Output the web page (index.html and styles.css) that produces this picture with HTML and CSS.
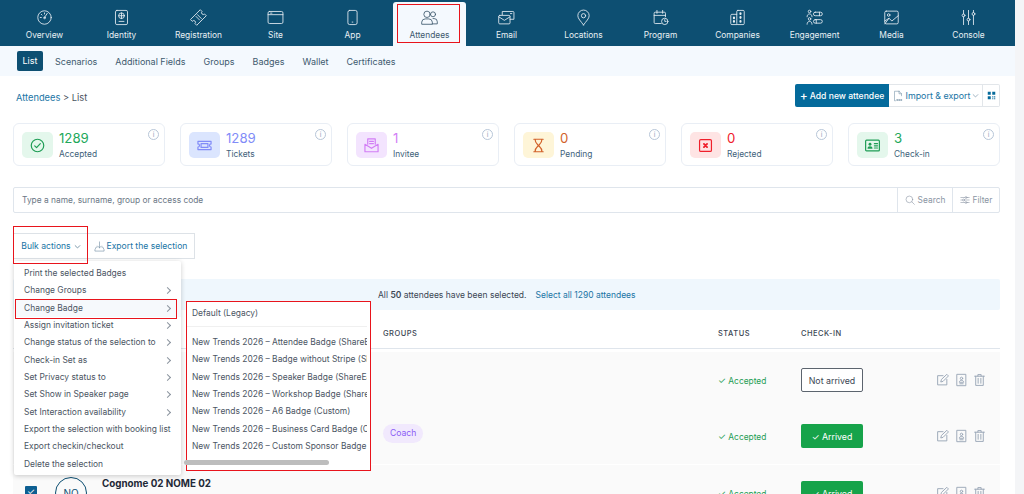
FILE: index.html
```html
<!DOCTYPE html>
<html>
    <head>
        <link rel="stylesheet" href="styles.css">
    </head>

    <body>
        <div class="page">
            <div class="main">
                <!-- Main navigation -->
                <div class="topnav">
                    <a class="navitem">
                        <svg viewBox="0 0 24 24"><circle cx="12" cy="12" r="9.500"/><path d="M12 12l4-6M6 12h1.500M12 5.500V7M7.500 7.500l1 1"/><circle cx="12" cy="12.500" r="1.200"/></svg>
                        Overview
                    </a>
                    <a class="navitem">
                        <svg viewBox="0 0 24 24"><rect x="3.500" y="2" width="17" height="20" rx="2"/><circle cx="12" cy="9.500" r="4"/><path d="M8 9.500h8M12 5.500v8M8.500 17.500h7"/></svg>
                        Identity
                    </a>
                    <a class="navitem">
                        <svg viewBox="0 0 24 24"><path d="M1 14.500L14.500 1l2.500 2.500a2 2 0 0 0 3.500 3.500L23 9.500 9.500 23 7 20.500a2 2 0 0 0-3.500-3.500z"/><path d="M8.500 10.500l5 5M10.500 8l5.500 5.500"/></svg>
                        Registration
                    </a>
                    <a class="navitem">
                        <svg viewBox="0 0 24 24"><rect x="1.500" y="3.500" width="21" height="17" rx="2"/><path d="M1.500 8h21M5 5.800h2"/></svg>
                        Site
                    </a>
                    <a class="navitem">
                        <svg viewBox="0 0 24 24"><rect x="5.500" y="2" width="13" height="20" rx="2.500"/><path d="M11.500 18.500h1"/></svg>
                        App
                    </a>
                    <a class="navitem navitem-active">
                        <svg viewBox="0 0 24 24"><circle cx="8.500" cy="7.500" r="4.500"/><circle cx="17" cy="7.500" r="3.500"/><path d="M1 21v-2.500a5 5 0 0 1 5-4.500h5a5 5 0 0 1 5 4.500V21zM17 13.500h1.500a4.500 4.500 0 0 1 4.500 4.500v3h-7"/></svg>
                        Attendees
                    </a>
                    <a class="navitem">
                        <svg viewBox="0 0 24 24"><path d="M6 8V3.500h15a1.500 1.500 0 0 1 1.500 1.500v9.500H17"/><rect x="1" y="9" width="16" height="12" rx="1.500"/><path d="M1 11l8 5 8-5M17.500 6.500h2"/></svg>
                        Email
                    </a>
                    <a class="navitem">
                        <svg viewBox="0 0 24 24"><path d="M12 22.500C8 17 4 13.500 4 9.500a8 8 0 0 1 16 0c0 4-4 7.500-8 13z"/><circle cx="12" cy="9.500" r="3"/></svg>
                        Locations
                    </a>
                    <a class="navitem">
                        <svg viewBox="0 0 24 24"><path d="M13 20.500H4.500A1.500 1.500 0 0 1 3 19V6a1.500 1.500 0 0 1 1.500-1.500h13A1.500 1.500 0 0 1 19 6v5M3 9h16M7 2v4M15 2v4"/><circle cx="18" cy="17.500" r="4.500"/><path d="M18 15v2.500h2"/></svg>
                        Program
                    </a>
                    <a class="navitem">
                        <svg viewBox="0 0 24 24"><rect x="11" y="2" width="10.500" height="20" rx="1.500"/><path d="M11 7.500H4A1.500 1.500 0 0 0 2.500 9v11.500A1.500 1.500 0 0 0 4 22h7"/><path class="thick" d="M16.200 6v1M16.200 11.500v1M16.200 17v1M7 12v1M7 17v1"/></svg>
                        Companies
                    </a>
                    <a class="navitem">
                        <svg viewBox="0 0 24 24"><circle cx="5" cy="3.500" r="1.800"/><path d="M1.500 11c0-2.500 1.500-4 3.500-4s3.500 1.500 3.500 4"/><circle cx="5" cy="14" r="1.800"/><path d="M1.500 21.500c0-2.500 1.500-4 3.500-4s3.500 1.500 3.500 4"/><rect x="10.500" y="4.500" width="12.500" height="5" rx="2.500"/><rect x="10.500" y="15" width="12.500" height="5" rx="2.500"/><path d="M19 4.500v5M14.500 15v5"/></svg>
                        Engagement
                    </a>
                    <a class="navitem">
                        <svg viewBox="0 0 24 24"><rect x="2.500" y="3" width="19" height="18" rx="2"/><circle cx="8" cy="8.500" r="1.800"/><path d="M2.500 17l6-4 4 4 9-7.500M2.500 21l6-8"/></svg>
                        Media
                    </a>
                    <a class="navitem">
                        <svg viewBox="0 0 24 24"><path d="M5 2v5M5 11v11M12 2v11M12 17v5M19 2v3M19 9v13"/><circle cx="5" cy="9" r="2"/><circle cx="12" cy="15" r="2"/><circle cx="19" cy="7" r="2"/></svg>
                        Console
                    </a>
                </div>

                <!-- Attendees sections -->
                <div class="subnav">
                    <a class="subitem subitem-active">List</a>
                    <a class="subitem">Scenarios</a>
                    <a class="subitem">Additional Fields</a>
                    <a class="subitem">Groups</a>
                    <a class="subitem">Badges</a>
                    <a class="subitem">Wallet</a>
                    <a class="subitem">Certificates</a>
                </div>

                <div class="content">
                    <div class="headrow">
                        <div class="breadcrumb"><a>Attendees</a> &gt; List</div>
                        <div class="headbtns">
                            <a class="btn-add"><span class="plus">+</span> Add new attendee</a>
                            <a class="btn-import">
                                <svg viewBox="0 0 24 24"><path d="M14 2.500H5v19h2M14 2.500l5 5v4M14 2.500v5h5"/><path class="thick" d="M10 20h1M14 20h1M18 20h1"/></svg>
                                Import &amp; export
                                <svg class="chev" viewBox="0 0 12 12"><path d="M2 4.500l4 4 4-4"/></svg>
                            </a>
                            <a class="btn-qr">
                                <svg viewBox="0 0 12 12"><rect x="1" y="1" width="4" height="4"/><rect x="7" y="1" width="4" height="4"/><rect x="1" y="7" width="4" height="4"/><path d="M7 7h1.500v1.500H7zM9.500 7H11v1.500H9.500zM7 9.500h1.500V11H7zM9.500 9.500H11V11H9.500z"/></svg>
                            </a>
                        </div>
                    </div>

                    <div class="stats">
                        <div class="stat">
                            <div class="tile tile-green">
                                <svg viewBox="0 0 24 24"><circle cx="12" cy="12" r="10"/><path d="M7.500 12.500l3 3 6-6.500"/></svg>
                            </div>
                            <div>
                                <div class="num num-green">1289</div>
                                <div class="lbl">Accepted</div>
                            </div>
                            <span class="info">i</span>
                        </div>
                        <div class="stat">
                            <div class="tile tile-blue">
                                <svg viewBox="0 0 24 24"><path d="M1.500 5.500h21v4a2.500 2.500 0 0 0 0 5v4h-21v-4a2.500 2.500 0 0 0 0-5z"/><rect x="6.500" y="9" width="11" height="6"/></svg>
                            </div>
                            <div>
                                <div class="num num-blue">1289</div>
                                <div class="lbl">Tickets</div>
                            </div>
                            <span class="info">i</span>
                        </div>
                        <div class="stat">
                            <div class="tile tile-purple">
                                <svg viewBox="0 0 24 24"><path d="M6 10V1.500h12V10M1.500 10v12h21V10M1.500 10L12 16.500 22.500 10M9 5.500h6M9 9h6"/></svg>
                            </div>
                            <div>
                                <div class="num num-purple">1</div>
                                <div class="lbl">Invitee</div>
                            </div>
                            <span class="info">i</span>
                        </div>
                        <div class="stat">
                            <div class="tile tile-yellow">
                                <svg viewBox="0 0 24 24"><path d="M4.500 2h15M4.500 22h15M6.500 2c0 6 3 7.500 5.500 10-2.500 2.500-5.500 4-5.500 10M17.500 2c0 6-3 7.500-5.500 10 2.500 2.500 5.500 4 5.500 10"/></svg>
                            </div>
                            <div>
                                <div class="num num-orange">0</div>
                                <div class="lbl">Pending</div>
                            </div>
                            <span class="info">i</span>
                        </div>
                        <div class="stat">
                            <div class="tile tile-red">
                                <svg viewBox="0 0 24 24"><rect x="2.500" y="2.500" width="19" height="19" rx="2"/><path class="thick" d="M9.500 9.500l5 5M14.500 9.500l-5 5"/></svg>
                            </div>
                            <div>
                                <div class="num num-red">0</div>
                                <div class="lbl">Rejected</div>
                            </div>
                            <span class="info">i</span>
                        </div>
                        <div class="stat">
                            <div class="tile tile-green">
                                <svg viewBox="0 0 24 24"><rect x="1" y="3.500" width="22" height="17" rx="1.500"/><circle cx="8" cy="10" r="2.300" class="solid"/><path class="solid" d="M4 17c0-2.500 1.500-3.800 4-3.800s4 1.300 4 3.800z"/><path d="M15 9h5M15 12.500h5M15 16h5"/></svg>
                            </div>
                            <div>
                                <div class="num num-green">3</div>
                                <div class="lbl">Check-in</div>
                            </div>
                            <span class="info">i</span>
                        </div>
                    </div>

                    <div class="searchbar">
                        <div class="searchtext">Type a name, surname, group or access code</div>
                        <a class="searchbtn searchbtn-search">
                            <svg viewBox="0 0 24 24"><circle cx="10.500" cy="10.500" r="8"/><path d="M16.500 16.500l6 6"/></svg>
                            Search
                        </a>
                        <a class="searchbtn searchbtn-filter">
                            <svg viewBox="0 0 24 24"><path d="M2 6h10M17 6h5M2 12h4M11 12h11M2 18h10M17 18h5"/><circle cx="14.500" cy="6" r="2.300"/><circle cx="8.500" cy="12" r="2.300"/><circle cx="14.500" cy="18" r="2.300"/></svg>
                            Filter
                        </a>
                    </div>

                    <div class="bulkrow">
                        <a class="bulkbtn">Bulk actions <svg class="chev" viewBox="0 0 12 12"><path d="M2 4.500l4 4 4-4"/></svg></a>
                        <a class="exportbtn">
                            <svg viewBox="0 0 24 24"><path d="M12 2v13M8 11l4 4 4-4M7 13H5l-3 6v3h20v-3l-3-6h-2"/></svg>
                            Export the selection
                        </a>
                    </div>

                    <div class="notice">
                        All&nbsp;<b>50</b>&nbsp;attendees have been selected.
                        <a>Select all 1290 attendees</a>
                    </div>

                    <div class="thead">
                        <div></div>
                        <div>GROUPS</div>
                        <div>STATUS</div>
                        <div>CHECK-IN</div>
                        <div></div>
                    </div>

                    <div class="trow trow-first">
                        <div></div>
                        <div></div>
                        <div class="status"><span class="tick">&#10003;</span> Accepted</div>
                        <div><a class="checkin">Not arrived</a></div>
                        <div class="actions">
                            <svg viewBox="0 0 24 24"><path d="M13 4H3v17h17V11"/><path d="M9 15l1-4L20 1.500 23 4.500 13.500 14z"/></svg>
                            <svg viewBox="0 0 24 24"><rect x="4" y="1.500" width="16" height="21"/><circle cx="12" cy="9" r="2.200"/><path d="M8 15.500c0-2 2-2.800 4-2.800s4 .8 4 2.800zM9 19h6"/></svg>
                            <svg viewBox="0 0 24 24"><path d="M3 5h18M9 5V2h6v3M5 5v17h14V5M9.500 9v9M14.500 9v9"/></svg>
                        </div>
                    </div>
                    <div class="trow">
                        <div></div>
                        <div><span class="pill">Coach</span></div>
                        <div class="status"><span class="tick">&#10003;</span> Accepted</div>
                        <div><a class="checkin checkin-on">&#10003; Arrived</a></div>
                        <div class="actions">
                            <svg viewBox="0 0 24 24"><path d="M13 4H3v17h17V11"/><path d="M9 15l1-4L20 1.500 23 4.500 13.500 14z"/></svg>
                            <svg viewBox="0 0 24 24"><rect x="4" y="1.500" width="16" height="21"/><circle cx="12" cy="9" r="2.200"/><path d="M8 15.500c0-2 2-2.800 4-2.800s4 .8 4 2.800zM9 19h6"/></svg>
                            <svg viewBox="0 0 24 24"><path d="M3 5h18M9 5V2h6v3M5 5v17h14V5M9.500 9v9M14.500 9v9"/></svg>
                        </div>
                    </div>
                    <div class="trow">
                        <div class="person">
                            <span class="check">&#10003;</span>
                            <span class="avatar">NO</span>
                            <span class="name">Cognome 02 NOME 02</span>
                        </div>
                        <div></div>
                        <div class="status"><span class="tick">&#10003;</span> Accepted</div>
                        <div><a class="checkin checkin-on">&#10003; Arrived</a></div>
                        <div class="actions">
                            <svg viewBox="0 0 24 24"><path d="M13 4H3v17h17V11"/><path d="M9 15l1-4L20 1.500 23 4.500 13.500 14z"/></svg>
                            <svg viewBox="0 0 24 24"><rect x="4" y="1.500" width="16" height="21"/><circle cx="12" cy="9" r="2.200"/><path d="M8 15.500c0-2 2-2.800 4-2.800s4 .8 4 2.800zM9 19h6"/></svg>
                            <svg viewBox="0 0 24 24"><path d="M3 5h18M9 5V2h6v3M5 5v17h14V5M9.500 9v9M14.500 9v9"/></svg>
                        </div>
                    </div>
                </div>
            </div>
            <div class="pagescroll"></div>

            <!-- Bulk actions menu, open -->
            <div class="menu">
                <a class="menuitem">Print the selected Badges</a>
                <a class="menuitem menuitem-sub">Change Groups</a>
                <a class="menuitem menuitem-sub menuitem-on">Change Badge</a>
                <a class="menuitem menuitem-sub">Assign invitation ticket</a>
                <a class="menuitem menuitem-sub">Change status of the selection to</a>
                <a class="menuitem menuitem-sub">Check-in Set as</a>
                <a class="menuitem menuitem-sub">Set Privacy status to</a>
                <a class="menuitem menuitem-sub">Set Show in Speaker page</a>
                <a class="menuitem menuitem-sub">Set Interaction availability</a>
                <a class="menuitem">Export the selection with booking list</a>
                <a class="menuitem">Export checkin/checkout</a>
                <a class="menuitem">Delete the selection</a>
            </div>

            <div class="submenu">
                <div class="subdefault">Default (Legacy)</div>
                <div class="sublist">
                    <div>New Trends 2026 – Attendee Badge (ShareEasy)</div>
                    <div>New Trends 2026 – Badge without Stripe (ShareEasy)</div>
                    <div>New Trends 2026 – Speaker Badge (ShareEasy)</div>
                    <div>New Trends 2026 – Workshop Badge (ShareEasy)</div>
                    <div>New Trends 2026 – A6 Badge (Custom)</div>
                    <div>New Trends 2026 – Business Card Badge (Custom)</div>
                    <div>New Trends 2026 – Custom Sponsor Badge (Custom)</div>
                </div>
                <div class="subscroll"><div class="subthumb"></div></div>
            </div>

            <!-- Red annotation box -->
            <div class="mark mark-bulk"></div>
        </div>
    </body>
</html>
```

FILE: styles.css
```css
html, body {
    margin: 0;
    height: 100%;
    overflow: hidden;
    background: #fff;
}

body {
    font-family: "Inter", "Liberation Sans", sans-serif;
    font-size: 8.500px;
    color: #3b4654;
}

svg {
    fill: none;
    stroke: currentColor;
    stroke-width: 1.500;
    stroke-linecap: round;
    stroke-linejoin: round;
}

.thick {
    stroke-width: 3;
}

.solid {
    fill: currentColor;
    stroke: none;
}

.page {
    position: relative;
    display: flex;
    width: 1024px;
    height: 494px;
    overflow: hidden;
}

.main {
    width: 1015px;
    flex: none;
}

.pagescroll {
    flex: 1;
    background: #f4f5f7;
}

/* Top nav */
.topnav {
    display: flex;
    height: 46px;
    padding-left: 6px;
    background: #0d4f72;
    box-sizing: border-box;
}

.navitem {
    width: 77px;
    height: 46px;
    padding-top: 9px;
    box-sizing: border-box;
    display: flex;
    flex-direction: column;
    align-items: center;
    gap: 4px;
    color: #e8eff4;
    font-size: 8.400px;
    line-height: 11px;
}

.navitem svg {
    width: 17px;
    height: 17px;
    stroke-width: 1.200;
}

.navitem-active {
    position: relative;
    margin: 2px 2px 0;
    height: 44px;
    padding-top: 7px;
    width: 73px;
    background: #f4f9fe;
    border-radius: 3px 3px 0 0;
    color: #3e5a6e;
}

.navitem-active::after {
    content: "";
    position: absolute;
    left: 4px;
    right: 6px;
    top: 2px;
    bottom: 3px;
    border: 1px solid #e8141c;
}

/* Sub nav */
.subnav {
    display: flex;
    align-items: center;
    height: 30px;
    padding-left: 17px;
    gap: 18px;
    background: #f4f9fe;
}

.subitem {
    color: #3e5a6e;
    font-size: 9px;
}

.subitem-active {
    height: 20px;
    line-height: 20px;
    padding: 0 5.500px;
    margin-right: -6px;
    background: #0d4f72;
    color: #fff;
    border-radius: 2px;
}

/* Content */
.content {
    padding: 0 15px 0 13px;
}

.headrow {
    display: flex;
    align-items: center;
    justify-content: space-between;
    height: 23px;
    margin-top: 8px;
}

.breadcrumb {
    padding: 3px 0 0 3px;
    font-size: 9.300px;
    color: #4a5360;
}

.breadcrumb a {
    color: #1a75a5;
}

.headbtns {
    display: flex;
    height: 23px;
}

.headbtns a {
    display: flex;
    align-items: center;
    box-sizing: border-box;
    border: 1px solid #e2e6ea;
    border-left: 0;
}

.headbtns .btn-add {
    width: 94px;
    justify-content: center;
    gap: 2px;
    background: #046a9b;
    border: 0;
    border-radius: 2px 0 0 2px;
    color: #fff;
    font-size: 8.600px;
    font-weight: 500;
}

.plus {
    font-size: 12px;
    line-height: 12px;
}

.headbtns .btn-import {
    width: 94px;
    justify-content: center;
    gap: 2px;
    color: #1a75a5;
    font-size: 8.900px;
}

.btn-import svg {
    width: 12px;
    height: 12px;
    stroke-width: 1.200;
    color: #7b97ab;
}

.chev {
    width: 7px;
    height: 7px;
    color: #6d8ba0;
}

.btn-import svg.chev {
    width: 7px;
    height: 7px;
}

.headbtns .btn-qr {
    width: 17px;
    justify-content: center;
    border-radius: 0 2px 2px 0;
    color: #046a9b;
}

.btn-qr svg {
    width: 9px;
    height: 9px;
    fill: currentColor;
    stroke: none;
}

/* Stat cards */
.stats {
    display: flex;
    gap: 15px;
    margin-top: 16px;
}

.stat {
    position: relative;
    display: flex;
    width: 152px;
    height: 43px;
    box-sizing: border-box;
    padding: 8px;
    gap: 6px;
    border: 1px solid #e9eef5;
    border-radius: 6px;
}

.tile {
    width: 31px;
    height: 26px;
    border-radius: 5px;
    display: flex;
    align-items: center;
    justify-content: center;
}

.tile svg {
    width: 15px;
    height: 15px;
    stroke-width: 1.900;
}

.tile-green {
    background: #e4f7ec;
    color: #1e9d55;
}

.tile-blue {
    background: #dbe5fe;
    color: #818cf8;
}

.tile-purple {
    background: #f3e4fe;
    color: #d27ef5;
}

.tile-yellow {
    background: #fef5d8;
    color: #d2622a;
}

.tile-red {
    background: #fee4e4;
    color: #f0202c;
}

.num {
    font-size: 13.200px;
    line-height: 15px;
    margin-top: -1px;
}

.num-green {
    color: #22a85a;
}

.num-blue {
    color: #818cf8;
}

.num-purple {
    color: #d27ef5;
}

.num-orange {
    color: #d2622a;
}

.num-red {
    color: #f0202c;
}

.lbl {
    margin-top: 3px;
    font-size: 8.400px;
    line-height: 11px;
    color: #3e5f7a;
}

.info {
    position: absolute;
    top: 5px;
    right: 5px;
    width: 9px;
    height: 9px;
    border: 1px solid #b7c6d8;
    border-radius: 50%;
    text-align: center;
    font-size: 7px;
    line-height: 9px;
    color: #93a7bd;
}

/* Search */
.searchbar {
    display: flex;
    height: 26px;
    margin-top: 21px;
    box-sizing: border-box;
    border: 1px solid #dfe5ec;
    border-radius: 2px;
    font-size: 8.400px;
    line-height: 24px;
}

.searchtext {
    flex: 1;
    padding-left: 8px;
    color: #6b7786;
}

.searchbtn {
    display: flex;
    align-items: center;
    justify-content: center;
    gap: 3px;
    border-left: 1px solid #dfe5ec;
    color: #8a95a3;
}

.searchbtn svg {
    width: 10px;
    height: 10px;
    stroke-width: 1.400;
}

.searchbtn-search {
    width: 54px;
}

.searchbtn-filter {
    width: 46px;
}

/* Bulk actions */
.bulkrow {
    display: flex;
    height: 26px;
    width: 182px;
    margin-top: 20px;
    box-sizing: border-box;
    border: 1px solid #dde2e7;
    color: #1a75a5;
    font-size: 8.600px;
}

.bulkbtn {
    width: 73px;
    display: flex;
    align-items: center;
    justify-content: center;
    gap: 3px;
    padding-left: 1px;
    box-sizing: border-box;
}

.exportbtn {
    flex: 1;
    display: flex;
    align-items: center;
    gap: 1.500px;
    padding-left: 7px;
}

.exportbtn svg {
    width: 11px;
    height: 11px;
    stroke-width: 1.300;
    color: #6d8ba0;
}

/* Notice */
.notice {
    display: flex;
    align-items: center;
    height: 31px;
    margin-top: 20px;
    padding-left: 365px;
    background: #eff7fd;
    border-radius: 2px;
    color: #3b4654;
}

.notice a {
    margin-left: 9px;
    color: #1a75a5;
}

.notice b {
    font-weight: 600;
}

/* Table */
.thead,
.trow {
    display: grid;
    grid-template-columns: 370px 335px 83px 122px 1fr;
    align-items: center;
}

.thead {
    height: 39px;
    padding-top: 8px;
    box-sizing: border-box;
    border-bottom: 1px solid #dfe5ec;
    font-size: 7.500px;
    font-weight: 500;
    letter-spacing: .5px;
    color: #3b4654;
}

.trow {
    height: 56px;
    margin-top: 1px;
    background: #fafafa;
}

.trow-first {
    margin-top: 3px;
    margin-bottom: -1px;
}

.status {
    color: #1f9d55;
    font-size: 8.400px;
}

.tick {
    font-size: 9px;
}

.checkin {
    display: flex;
    align-items: center;
    justify-content: center;
    width: 62px;
    height: 24px;
    box-sizing: border-box;
    border: 1px solid #5c646e;
    border-radius: 2px;
    background: #fff;
    color: #3b4654;
    font-size: 8.800px;
}

.checkin-on {
    border: 0;
    background: #16a34a;
    color: #fff;
}

.pill {
    display: inline-block;
    padding: 0 7px;
    height: 19px;
    margin-bottom: 5px;
    line-height: 19px;
    border-radius: 10px;
    background: #f1e9fd;
    color: #8b5cf6;
    font-size: 8.600px;
}

.actions {
    display: flex;
    gap: 5.500px;
    padding-left: 13px;
    color: #98a5b5;
}

.actions svg {
    width: 13px;
    height: 14px;
    stroke-width: 1.700;
}

.person {
    position: relative;
    align-self: start;
    height: 56px;
}

.check {
    position: absolute;
    left: 12px;
    top: 21px;
    width: 12px;
    height: 12px;
    background: #0d5f92;
    border-radius: 1px;
    color: #fff;
    font-size: 9px;
    line-height: 12px;
    text-align: center;
}

.avatar {
    position: absolute;
    left: 42px;
    top: 12px;
    width: 30px;
    height: 30px;
    border: 1px solid #0d4f72;
    border-radius: 50%;
    color: #0d4f72;
    font-size: 10px;
    line-height: 30px;
    text-align: center;
}

.name {
    position: absolute;
    left: 89px;
    top: 13px;
    font-size: 9.800px;
    font-weight: 700;
    color: #1f2937;
}

/* Open menus sit over the page */
.menu {
    position: absolute;
    left: 14px;
    top: 261px;
    width: 167px;
    height: 214px;
    padding-top: 4px;
    box-sizing: border-box;
    background: #fff;
    box-shadow: 0 1px 5px rgba(0, 0, 0, .2);
    border-radius: 2px;
}

.menuitem {
    display: block;
    position: relative;
    height: 17.350px;
    line-height: 17.350px;
    padding-left: 10px;
    font-size: 8.450px;
    color: #4b5563;
    white-space: nowrap;
}

.menuitem-sub::after {
    content: "";
    position: absolute;
    right: 11px;
    top: 6px;
    width: 4px;
    height: 4px;
    border-top: 1px solid #8a939e;
    border-right: 1px solid #8a939e;
    transform: rotate(45deg);
}

.menuitem-on {
    background: #f6f9fc;
}

.menuitem-on::before {
    content: "";
    position: absolute;
    left: 1px;
    top: -1px;
    width: 160px;
    height: 18px;
    border: 1px solid #e8141c;
}

.submenu {
    position: absolute;
    left: 186px;
    top: 301px;
    width: 185px;
    height: 170px;
    box-sizing: border-box;
    border: 1px solid #e8141c;
    background: #fff;
    font-size: 8.450px;
    color: #4b5563;
    white-space: nowrap;
}

.subdefault {
    height: 25px;
    width: 180px;
    line-height: 23px;
    padding-left: 5px;
    box-sizing: border-box;
    border-bottom: 1px solid #f0f0f0;
}

.sublist {
    padding: 7px 0 0 5px;
    height: 129px;
    box-sizing: border-box;
    overflow: hidden;
    width: 180px;
}

.sublist div {
    height: 17.350px;
    line-height: 17.350px;
    overflow: hidden;
}

.subscroll {
    height: 8px;
    width: 180px;
    margin-top: 4px;
}

.subthumb {
    width: 145px;
    height: 5px;
    margin-left: -3px;
    background: #bdbdbd;
    border-radius: 3px;
}

.mark {
    position: absolute;
    border: 1px solid #e8141c;
    box-sizing: border-box;
}

.mark-bulk {
    left: 13px;
    top: 226px;
    width: 75px;
    height: 38px;
}
```
